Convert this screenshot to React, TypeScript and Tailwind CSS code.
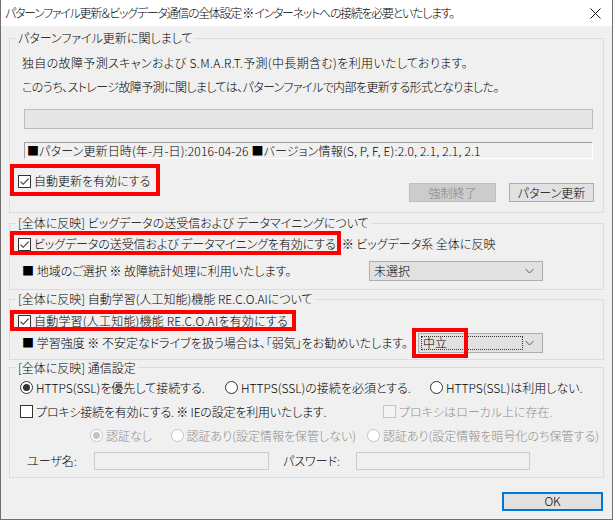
import React from "react";

function Check({ checked, disabled }: { checked?: boolean; disabled?: boolean }) {
  return (
    <span
      className={`flex h-[13px] w-[13px] shrink-0 items-center justify-center border ${
        disabled ? "border-[#c4c4c4] bg-[#f4f4f4]" : "border-[#333333] bg-white"
      }`}
    >
      {checked && (
        <svg width="11" height="11" viewBox="0 0 11 11">
          <path d="M1.5 5.6 L4.2 8.3 L9.6 2.6" fill="none" stroke="#333333" strokeWidth="1.1" />
        </svg>
      )}
    </span>
  );
}

function Radio({ checked, disabled }: { checked?: boolean; disabled?: boolean }) {
  return (
    <span
      className={`flex h-[13px] w-[13px] shrink-0 items-center justify-center rounded-full border ${
        disabled ? "border-[#c4c4c4] bg-white" : "border-[#333333] bg-white"
      }`}
    >
      {checked && (
        <span className={`h-[7px] w-[7px] rounded-full ${disabled ? "bg-[#c4c4c4]" : "bg-[#333333]"}`} />
      )}
    </span>
  );
}

function Chevron() {
  return (
    <svg width="9" height="6" viewBox="0 0 9 6" className="mr-[8px]">
      <path d="M0.5 1 L4.5 5 L8.5 1" fill="none" stroke="#5a5a5a" strokeWidth="1" />
    </svg>
  );
}

function Group({ title, className, children }: { title: string; className: string; children: React.ReactNode }) {
  return (
    <fieldset className={`min-w-0 border border-[#dcdcdc] p-0 ${className}`}>
      <legend className="ml-[6px] px-[2px] leading-[14px]">{title}</legend>
      {children}
    </fieldset>
  );
}

export default function App() {
  return (
    <div className="h-[522px] w-[615px] bg-white font-['Noto_Sans_CJK_JP','Noto_Sans',sans-serif] text-[12px] font-light leading-[16px] text-black [font-feature-settings:'palt']">
      <div className="flex h-[520px] w-[613px] flex-col border-x border-b border-[#6f6f6f] bg-[#f0f0f0]">
        {/* title bar */}
        <div className="flex h-[26px] shrink-0 items-center justify-between bg-white pl-[4px] pr-[11px]">
          <span className="tracking-[-1.3px]">パターンファイル更新＆ビッグデータ通信の全体設定 ※ インターネットへの接続を必要といたします。</span>
          <svg width="11" height="11" viewBox="0 0 11 11">
            <path d="M0.5 0.5 L10.5 10.5 M10.5 0.5 L0.5 10.5" stroke="#111111" strokeWidth="1" />
          </svg>
        </div>

        <div className="flex flex-col px-[8px]">
          <Group title="パターンファイル更新に関しまして" className="mt-[5px]">
            <div className="pb-[10px] pl-[12px] pr-[10px] pt-[6px]">
              <p className="leading-[24px] tracking-[0.35px]">独自の故障予測スキャンおよび S.M.A.R.T.予測(中長期含む)を利用いたしております。</p>
              <p className="leading-[24px] tracking-[-0.6px]">このうち、ストレージ故障予測に関しましては、パターンファイルで内部を更新する形式となりました。</p>
              <div className="ml-[2px] mt-[10px] h-[20px] border border-[#bcbcbc] bg-[#e6e6e6]" />
              <div className="ml-[2px] mt-[13px] flex h-[17px] items-center border border-b-white border-l-[#a0a0a0] border-r-white border-t-[#a0a0a0] pl-[2px] tracking-[0.15px]">
                ■パターン更新日時(年-月-日):2016-04-26 ■バージョン情報(S, P, F, E):2.0, 2.1, 2.1, 2.1
              </div>
              <div className="mt-[14px] flex items-start justify-between">
                <span className="relative -ml-[4px] inline-flex items-center gap-[3px]">
                  <Check checked />
                  <span>自動更新を有効にする</span>
                  <span className="pointer-events-none absolute -bottom-[7px] -left-[8px] -right-[10px] -top-[9px] border-4 border-[#ff0000]" />
                </span>
                <div className="mt-[10px] flex gap-[13px]">
                  <button className="h-[19px] w-[87px] border border-[#bfbfbf] bg-[#cccccc] text-[#838383]">強制終了</button>
                  <button className="-mr-[1px] h-[19px] w-[85px] border border-[#adadad] bg-[#e1e1e1]">パターン更新</button>
                </div>
              </div>
            </div>
          </Group>

          <Group title="[全体に反映] ビッグデータの送受信および データマイニングについて" className="mt-[3px]">
            <div className="pb-[8px] pl-[12px] pr-[10px] pt-[6px]">
              <div className="flex items-center">
                <span className="relative -ml-[4px] inline-flex items-center gap-[3px]">
                  <Check checked />
                  <span className="tracking-[-0.1px]">ビッグデータの送受信および データマイニングを有効にする</span>
                  <span className="pointer-events-none absolute -bottom-[3px] -left-[8px] -right-[5px] -top-[5px] border-4 border-[#ff0000]" />
                </span>
                <span className="ml-[6px]">※ ビッグデータ系 全体に反映</span>
              </div>
              <div className="mt-[9px] flex items-center">
                <span className="w-[347px]">■ 地域のご選択 ※ 故障統計処理に利用いたします。</span>
                <div className="flex h-[20px] w-[174px] items-center border border-[#adadad] bg-[#e1e1e1] pl-[4px]">
                  <span className="flex-1">未選択</span>
                  <Chevron />
                </div>
              </div>
            </div>
          </Group>

          <Group title="[全体に反映] 自動学習(人工知能)機能 RE.C.O.AIについて" className="mt-[2px]">
            <div className="pb-[6px] pl-[12px] pr-[10px] pt-[7px]">
              <span className="relative -ml-[4px] inline-flex items-center gap-[3px]">
                <Check checked />
                <span className="tracking-[0.2px]">自動学習(人工知能)機能 RE.C.O.AIを有効にする</span>
                <span className="pointer-events-none absolute -bottom-[2px] -left-[8px] -right-[8px] -top-[3px] border-4 border-[#ff0000]" />
              </span>
              <div className="mt-[3px] flex items-center">
                <span className="w-[396px]">■ 学習強度 ※ 不安定なドライブを扱う場合は、「弱気」をお勧めいたします。</span>
                <div className="relative flex h-[20px] w-[125px] items-center border border-[#adadad] bg-[#e1e1e1] pl-[2px]">
                  <span className="flex h-[14px] w-[102px] items-center border border-dotted border-[#333333] pl-[1px]">中立</span>
                  <span className="flex-1" />
                  <Chevron />
                  <span className="pointer-events-none absolute -left-[7px] -top-[6px] h-[30px] w-[56px] border-4 border-[#ff0000]" />
                </div>
              </div>
            </div>
          </Group>

          <Group title="[全体に反映] 通信設定" className="mt-[1px]">
            <div className="pb-[7px] pl-[12px] pr-[4px] pt-[5px]">
              <div className="-ml-[2px] flex items-center">
                <span className="flex w-[205px] items-center gap-[3px]">
                  <Radio checked />
                  <span>HTTPS(SSL)を優先して接続する.</span>
                </span>
                <span className="flex w-[205px] items-center gap-[3px]">
                  <Radio />
                  <span>HTTPS(SSL)の接続を必須とする.</span>
                </span>
                <span className="flex items-center gap-[3px]">
                  <Radio />
                  <span>HTTPS(SSL)は利用しない.</span>
                </span>
              </div>
              <div className="-ml-[2px] mt-[8px] flex items-center">
                <span className="flex w-[363px] items-center gap-[3px]">
                  <Check />
                  <span className="tracking-[-0.2px]">プロキシ接続を有効にする. ※ IEの設定を利用いたします.</span>
                </span>
                <span className="flex items-center gap-[3px] text-[#8d8d8d]">
                  <Check disabled />
                  <span>プロキシはローカル上に存在.</span>
                </span>
              </div>
              <div className="ml-[68px] mt-[8px] flex items-center text-[#8d8d8d]">
                <span className="flex w-[82px] items-center gap-[3px]">
                  <Radio checked disabled />
                  <span>認証なし</span>
                </span>
                <span className="flex w-[200px] items-center gap-[3px]">
                  <Radio disabled />
                  <span>認証あり(設定情報を保管しない)</span>
                </span>
                <span className="flex items-center gap-[3px] whitespace-nowrap">
                  <Radio disabled />
                  <span>認証あり(設定情報を暗号化のち保管する)</span>
                </span>
              </div>
              <div className="mt-[8px] flex items-center">
                <span className="ml-[5px] w-[67px]">ユーザ名:</span>
                <span className="h-[18px] w-[175px] border border-[#cccccc] bg-[#f0f0f0]" />
                <span className="ml-[14px] w-[73px]">パスワード:</span>
                <span className="h-[18px] w-[174px] border border-[#cccccc] bg-[#f0f0f0]" />
              </div>
            </div>
          </Group>

          <div className="mt-[14px] flex justify-end">
            <button className="mr-[1px] h-[19px] w-[101px] border-2 border-[#0078d7] bg-[#e1e1e1] leading-[14px]">OK</button>
          </div>
        </div>
      </div>
    </div>
  );
}
